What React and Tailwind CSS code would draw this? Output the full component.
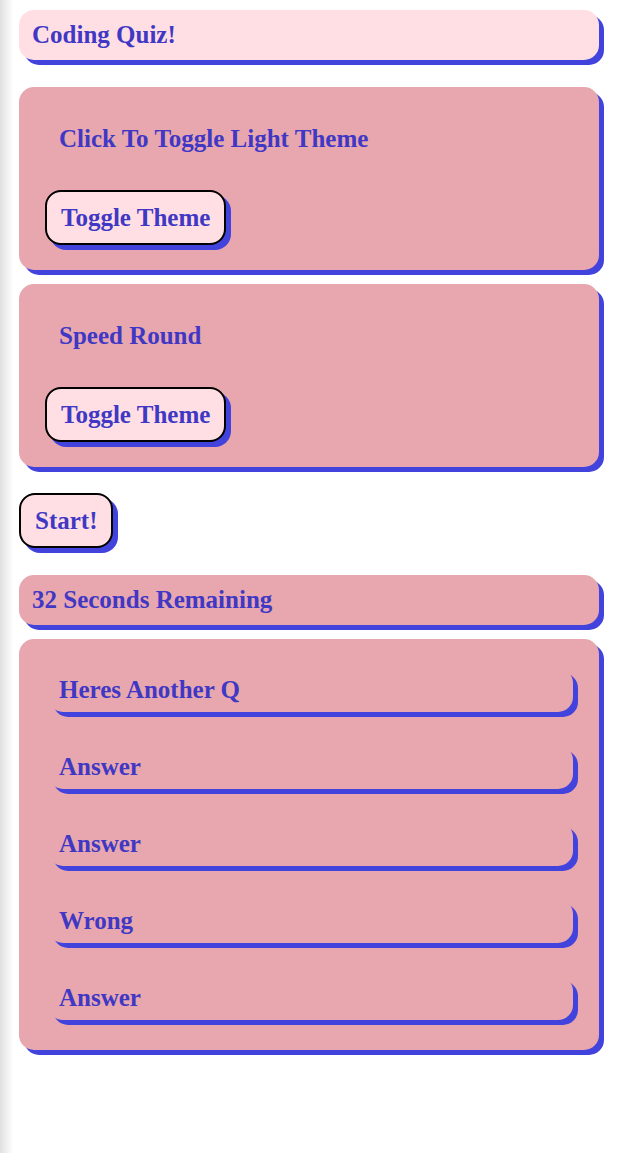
import React from "react";

const serif = "font-['Liberation_Serif','Times_New_Roman',serif] font-bold";

function Btn({ children, className = "" }) {
  return (
    <button
      className={`${serif} text-[25px] leading-[27px] text-[#4038c4] bg-[#ffdfe3] border-2 border-black rounded-[16px] px-[14px] py-[12px] shadow-[5px_5px_0_#4242dc] ${className}`}
    >
      {children}
    </button>
  );
}

function Answer({ children }) {
  return (
    <div className="h-[44px] rounded-[15px] shadow-[5px_5px_0_#4242dc] flex items-center pl-[11px]">
      <span className={`${serif} text-[25px] leading-[28px] text-[#4038c4]`}>{children}</span>
    </div>
  );
}

export default function App() {
  return (
    <div className="min-h-[1153px] bg-[linear-gradient(to_right,#e0e0e0,#ffffff_13px)] pl-[19px] pr-[20px] pt-[10px]">
      <div className="flex flex-col items-stretch">
        <div className="h-[50px] bg-[#ffdfe3] rounded-[15px] shadow-[5px_5px_0_#4242dc] flex items-center pl-[13px]">
          <span className={`${serif} text-[25px] leading-[28px] text-[#4038c4]`}>Coding Quiz!</span>
        </div>

        <div className="mt-[27px] h-[183px] bg-[#e8a7ae] rounded-[15px] shadow-[5px_5px_0_#4242dc] flex flex-col items-start pl-[26px] pt-[38px]">
          <div className={`${serif} text-[25px] leading-[28px] text-[#4038c4] pl-[14px]`}>Click To Toggle Light Theme</div>
          <Btn className="mt-[37px]">Toggle Theme</Btn>
        </div>

        <div className="mt-[14px] h-[183px] bg-[#e8a7ae] rounded-[15px] shadow-[5px_5px_0_#4242dc] flex flex-col items-start pl-[26px] pt-[38px]">
          <div className={`${serif} text-[25px] leading-[28px] text-[#4038c4] pl-[14px]`}>Speed Round</div>
          <Btn className="mt-[37px]">Toggle Theme</Btn>
        </div>

        <div className="mt-[26px] flex">
          <Btn>Start!</Btn>
        </div>

        <div className="mt-[27px] h-[50px] bg-[#e8a7ae] rounded-[15px] shadow-[5px_5px_0_#4242dc] flex items-center pl-[13px]">
          <span className={`${serif} text-[25px] leading-[28px] text-[#4038c4]`}>32 Seconds Remaining</span>
        </div>

        <div className="mt-[14px] bg-[#e8a7ae] rounded-[15px] shadow-[5px_5px_0_#4242dc] flex flex-col gap-[33px] pl-[29px] pr-[26px] pt-[29px] pb-[30px]">
          <Answer>Heres Another Q</Answer>
          <Answer>Answer</Answer>
          <Answer>Answer</Answer>
          <Answer>Wrong</Answer>
          <Answer>Answer</Answer>
        </div>
      </div>
    </div>
  );
}
